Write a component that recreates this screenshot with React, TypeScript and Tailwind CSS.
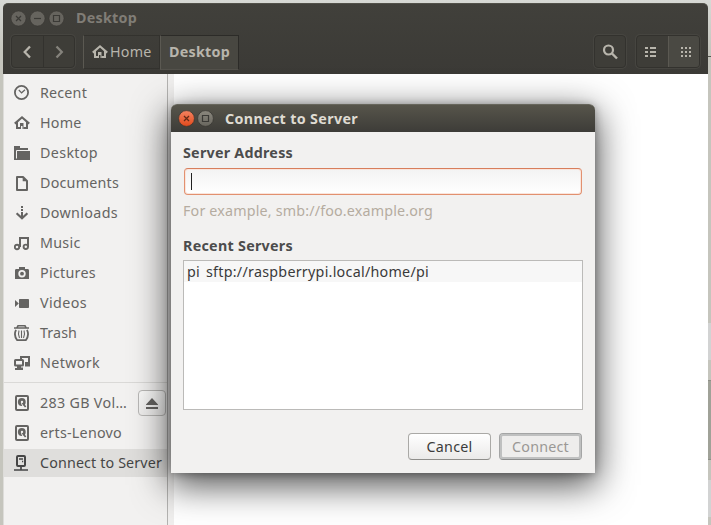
import { useLayoutEffect, useRef, type ReactNode } from "react";

const FONT = "font-['Noto_Sans','Open_Sans',sans-serif]";

/* Text whose tracking is spread so the run is exactly `width` pixels long. */
function Label({ text, width, className = "" }: { text: string; width: number; className?: string }) {
  const ref = useRef<HTMLSpanElement>(null);
  useLayoutEffect(() => {
    const el = ref.current;
    if (!el) return;
    el.style.letterSpacing = "0px";
    const natural = el.getBoundingClientRect().width;
    el.style.letterSpacing = `${(width - natural) / text.length}px`;
  }, [text, width]);
  return (
    <span ref={ref} className={`inline-block whitespace-pre ${className}`}>
      {text}
    </span>
  );
}

function Svg({ children, className = "" }: { children: ReactNode; className?: string }) {
  return (
    <svg viewBox="0 0 16 16" width="16" height="16" fill="none" stroke="currentColor" strokeWidth="2" className={`shrink-0 ${className}`}>
      {children}
    </svg>
  );
}

const HomeIcon = () => (
  <Svg>
    <path d="M.8 8.6 8 2.3l7.2 6.3" strokeWidth="2.1" />
    <path d="M3 7v6h3.6M13 7v6H9.4" />
    <path d="M6 8h3.5v6H8.5v-3H7v3H6z" fill="currentColor" stroke="none" />
  </Svg>
);

const DriveIcon = () => (
  <Svg>
    <rect x="2" y="1" width="12" height="14" rx="1" />
    <circle cx="7.8" cy="7" r="3.9" fill="currentColor" stroke="none" />
    <circle cx="8" cy="7" r="1.2" fill="#f2f1f0" stroke="none" />
    <path d="M7.5 8.2 9.5 11.8" stroke="#f2f1f0" strokeWidth="1.2" />
    <path d="M8.6 8l3 4" strokeWidth="1.7" />
  </Svg>
);

const icons: Record<string, ReactNode> = {
  Recent: (
    <Svg>
      <circle cx="7.5" cy="7.5" r="6.6" strokeWidth="1.8" />
      <path d="M4.8 5 7.6 7.8 11 4.7" strokeWidth="1.2" />
    </Svg>
  ),
  Home: <HomeIcon />,
  Desktop: (
    <Svg>
      <path d="M0 1h6v2h8v2H3v10H0z" fill="currentColor" stroke="none" />
      <path d="M3 6H16v9H2V6z" fill="currentColor" stroke="none" />
      <path d="M2.5 13.5V5.5H16" stroke="#f2f1f0" strokeWidth="1" />
    </Svg>
  ),
  Documents: (
    <Svg>
      <path d="M3 2h6l4 4v9H3z" strokeLinejoin="round" />
      <path d="M8.7 2v4.3H13z" fill="currentColor" stroke="none" />
    </Svg>
  ),
  Downloads: (
    <Svg>
      <path d="M7 1h2v2H7zM7 4h2v2H7zM7 7h2v6H7z" fill="currentColor" stroke="none" />
      <path d="M2.6 8.2 8 13.2l5.4-5" strokeWidth="2.2" />
    </Svg>
  ),
  Music: (
    <Svg>
      <circle cx="3" cy="12" r="2.2" strokeWidth="1.9" />
      <circle cx="11.8" cy="11.8" r="2.2" strokeWidth="1.9" />
      <path d="M6 12V3h8v9" />
    </Svg>
  ),
  Pictures: (
    <Svg>
      <path fillRule="evenodd" d="M5 2h6v2h2.6c.8 0 1.4.6 1.4 1.4V14H1V5.4C1 4.6 1.6 4 2.4 4H5zM8 5a3.7 3.7 0 1 0 0 7.4A3.7 3.7 0 0 0 8 5z" fill="currentColor" stroke="none" />
      <circle cx="8" cy="8.7" r="1.9" fill="currentColor" stroke="none" />
    </Svg>
  ),
  Videos: (
    <Svg>
      <path d="M1 5l3.8 3.5L1 12zM6 4h8c.6 0 1 .4 1 1v7c0 .6-.4 1-1 1H6c-.6 0-1-.4-1-1V5c0-.6.4-1 1-1z" fill="currentColor" stroke="none" />
    </Svg>
  ),
  Trash: (
    <Svg>
      <path d="M0 3h15M3 2.6 4 .8h7l1 1.8" strokeWidth="1.6" />
      <path d="M2 4.8C.2 8.5 1.2 12.6 3.2 15.2h8.6c2-2.6 3-6.7 1.2-10.4" strokeWidth="1.8" />
      <path d="M5 5.5q-1.4 3.8.5 7.5M7.5 5.5V13M10 5.5q1.4 3.8-.5 7.5" strokeWidth="1.1" />
    </Svg>
  ),
  Network: (
    <Svg>
      <path d="M7 4V2h8v6h-3" />
      <rect x="1" y="5" width="8" height="5.5" rx=".6" />
      <path d="M3 11h4v1.4h2V15H1v-2h2zM11 7h3v2h2v2.5h-5z" fill="currentColor" stroke="none" />
    </Svg>
  ),
  Drive: <DriveIcon />,
  Connect: (
    <Svg>
      <rect x="3" y="1" width="8" height="10" rx="1" />
      <path d="M5 4h4M8 6.5h1.2M7 11v4M0 15h14" strokeWidth="1.7" />
    </Svg>
  ),
};

const places: [string, number][] = [
  ["Recent", 47],
  ["Home", 41.5],
  ["Desktop", 58],
  ["Documents", 79],
  ["Downloads", 78],
  ["Music", 40.5],
  ["Pictures", 56],
  ["Videos", 47],
  ["Trash", 37],
  ["Network", 60],
];

function Row({ icon, text, width, active = false, children }: { icon: string; text: string; width: number; active?: boolean; children?: ReactNode }) {
  return (
    <div className="flex h-[30px] items-center">
      <div className={`flex h-7 w-full items-center pl-2.5 ${active ? "bg-[#dfdedc] text-[#464646]" : "text-[#656462]"}`}>
        {icons[icon]}
        <Label text={text} width={width} className="ml-2.5" />
        {children}
      </div>
    </div>
  );
}

function InactiveDot({ children }: { children: ReactNode }) {
  return (
    <svg width="17" height="17" viewBox="0 0 17 17" fill="none" stroke="#3b3a36" strokeWidth="1.2">
      <circle cx="8.5" cy="8.5" r="7.5" fill="#66645e" stroke="#34332f" strokeWidth=".5" />
      {children}
    </svg>
  );
}

export default function App() {
  return (
    <div className={`relative flex h-[525px] w-[711px] overflow-hidden bg-[#c7c7bf] text-[14.3px] leading-5 ${FONT}`}>
      <div className="flex w-full flex-col bg-linear-to-b from-[#d7d9d5] to-[#c5c5bd] to-10% pt-[3px] pl-[3px]">
        <div className="flex h-[522px]">
          <div className="flex w-[705px] flex-col">
            <header className="flex h-[71px] flex-col rounded-t-[5px] border-t border-[#52514a] bg-linear-to-b from-[#41403b] to-[#3b3a36] text-[#b8b5ac]">
              <div className="flex h-7 items-center gap-0.5 pl-[7px] text-[#807d76]">
                <InactiveDot><path d="m6 6 5 5m0-5-5 5" /></InactiveDot>
                <InactiveDot><path d="M5 8.5h7" /></InactiveDot>
                <InactiveDot><path d="M5.5 5.5h6v6h-6z" /></InactiveDot>
                <Label text="Desktop" width={61} className="ml-[9px] font-bold" />
              </div>
              <div className="flex pt-[3px] pl-2">
                <div className="flex h-[33px] w-16 rounded border border-[#33322e] bg-[#3e3d38] shadow-[0_0_0_1px_#464540]">
                  <div className="flex w-8 items-center justify-center border-r border-[#33322e]">
                    <Svg><path d="M10 2.5 4.7 8l5.3 5.5" strokeWidth="2.3" /></Svg>
                  </div>
                  <div className="flex flex-1 items-center justify-center text-[#85837c]">
                    <Svg><path d="M5.5 2.5 10.8 8l-5.3 5.5" strokeWidth="2.3" /></Svg>
                  </div>
                </div>
                <div className="ml-2 flex h-[35px]">
                  <div className="flex h-[34px] w-[77px] items-center border border-[#33322e] border-l-[#5b5952] pl-2">
                    <HomeIcon />
                    <Label text="Home" width={41.5} className="ml-0.5" />
                  </div>
                  <div className="flex w-[79px] items-center border border-[#2c2b28] border-b-[#53514b] border-l-[#5b5952] bg-[#484741] pb-px pl-2 font-bold">
                    <Label text="Desktop" width={61} />
                  </div>
                </div>
                <div className="ml-[355px] flex h-[33px] w-8 items-center justify-center rounded border border-[#33322e] bg-[#3e3d38] shadow-[0_0_0_1px_#464540]">
                  <Svg><circle cx="6.5" cy="6" r="4.5" strokeWidth="2.2" /><path d="m10 9.5 5 5" strokeWidth="2.4" /></Svg>
                </div>
                <div className="ml-2.5 flex h-[33px] w-16 overflow-hidden rounded border border-[#33322e] bg-[#3e3d38] shadow-[0_0_0_1px_#464540]">
                  <div className="flex w-[31px] items-center pl-2">
                    <svg width="11" height="10" viewBox="0 0 11 10" fill="currentColor">
                      <path d="M0 0h3v2H0zM5 0h6v2H5zM0 4h3v2H0zM5 4h6v2H5zM0 8h3v2H0zM5 8h6v2H5z" />
                    </svg>
                  </div>
                  <div className="flex flex-1 items-center border-l border-[#5b5952] bg-[#4a4943] pl-3">
                    <svg width="10" height="10" viewBox="0 0 10 10" fill="currentColor">
                      <path d="M0 0h2v2H0zM4 0h2v2H4zM8 0h2v2H8zM0 4h2v2H0zM4 4h2v2H4zM8 4h2v2H8zM0 8h2v2H0zM4 8h2v2H4zM8 8h2v2H8z" />
                    </svg>
                  </div>
                </div>
              </div>
            </header>
            <div className="flex flex-1">
              <aside className="flex w-[165px] flex-col border-r border-l border-r-[#b4b3b1] border-l-[#dddcd9] bg-[#f2f1f0] pt-1">
                {places.map(([text, width]) => (
                  <Row key={text} icon={text} text={text} width={width} />
                ))}
                <div className="mt-1 mb-[5px] h-px bg-[#dad9d7]" />
                <Row icon="Drive" text="283 GB Vol…" width={87}>
                  <div className="ml-[11px] flex h-[26px] w-7 shrink-0 items-center justify-center rounded border border-[#b9b8b6] bg-linear-to-b from-[#f9f9f8] to-[#eeedec]">
                    <svg width="12" height="11" viewBox="0 0 12 11" fill="currentColor"><path d="M6 0 12 6.5V7H0v-.5zM0 9h12v2H0z" /></svg>
                  </div>
                </Row>
                <Row icon="Drive" text="erts-Lenovo" width={82} />
                <Row icon="Connect" text="Connect to Server" width={122} active />
              </aside>
              <div className="w-1.5 bg-[#f0efee]" />
              <main className="flex-1 bg-white" />
            </div>
          </div>
          <div className="flex w-[3px] flex-col">
            <div className="h-[53px]" />
            <div className="h-px bg-[#55554f]" />
            <div className="h-[266px]" />
            <div className="h-[37px] bg-[#d2d3d3]" />
            <div className="h-5" />
            <div className="h-20 border-y border-[#8d8f87] bg-[#a0a298]" />
            <div className="h-5" />
            <div className="h-[37px] bg-[#d2d3d3]" />
          </div>
        </div>
      </div>

      <section className="absolute top-[104px] left-[171px] flex h-[369px] w-[424px] flex-col rounded-t-[6px] bg-[#f2f1f0] text-[#4c4c4c] shadow-[0_10px_36px_2px_rgba(0,0,0,0.7),0_1px_8px_rgba(0,0,0,0.3)]">
        <div className="flex h-7 items-center rounded-t-[6px] border-t border-[#67665c] bg-linear-to-b from-[#57554b] to-[#3d3c38] pl-[7px] text-[#dfdbd2]">
          <svg width="17" height="17" viewBox="0 0 17 17" fill="none">
            <defs>
              <linearGradient id="orange" x1="0" y1="0" x2="0" y2="1"><stop stopColor="#f58361" /><stop offset="1" stopColor="#e04a1c" /></linearGradient>
            </defs>
            <circle cx="8.5" cy="8.5" r="7.9" fill="url(#orange)" stroke="#35342f" strokeWidth=".7" />
            <path d="m6 6 5 5m0-5-5 5" stroke="#642a17" strokeWidth="1.3" />
          </svg>
          <svg width="17" height="17" viewBox="0 0 17 17" fill="none" className="ml-0.5">
            <defs>
              <linearGradient id="gray" x1="0" y1="0" x2="0" y2="1"><stop stopColor="#8b887e" /><stop offset="1" stopColor="#68665e" /></linearGradient>
            </defs>
            <circle cx="8.5" cy="8.5" r="7.9" fill="url(#gray)" stroke="#35342f" strokeWidth=".7" />
            <path d="M5.5 5.5h6v6h-6z" stroke="#3b3a36" strokeWidth="1.2" />
          </svg>
          <Label text="Connect to Server" width={133} className="ml-[11px] font-bold" />
        </div>
        <div className="flex flex-1 flex-col px-3 pt-[11px]">
          <Label text="Server Address" width={110} className="self-start font-bold" />
          <div className="mt-[5px] mr-px ml-px flex h-[27px] shrink-0 items-center rounded-[4px] border border-[#e2906f] border-t-[#d87e5c] bg-linear-to-b from-[#f3f3f3] to-white pl-1.5 shadow-[inset_0_0_0_1px_#fae5dc]">
            <div className="h-[17px] w-px bg-[#222]" />
          </div>
          <Label text="For example, smb://foo.example.org" width={250} className="mt-1.5 self-start text-[#b5aca0]" />
          <Label text="Recent Servers" width={110} className="mt-[15px] self-start font-bold" />
          <div className="mt-1 h-[150px] shrink-0 border border-[#bbbab8] bg-white text-[#3a3a3a]">
            <div className="flex h-[21px] items-center bg-[#f7f7f7] pl-[3px]">
              <Label text="pi" width={13} />
              <Label text="sftp://raspberrypi.local/home/pi" width={223} className="ml-1.5" />
            </div>
          </div>
          <div className="mt-[23px] mr-px flex justify-end gap-2">
            <button className="flex h-[27px] w-[83px] items-center justify-center rounded-[4px] border border-[#aaa9a6] border-b-[#8f8e8b] bg-linear-to-b from-white to-[#ebeae9] text-[#3c3c3c]">
              <Label text="Cancel" width={46} />
            </button>
            <button className="flex h-[27px] w-[83px] items-center justify-center rounded-[4px] border border-[#a4a5a5] border-b-[#8d8e8e] bg-[#eeedec] text-[#9a9895] shadow-[inset_0_0_0_2px_#bfc0c0]">
              <Label text="Connect" width={57} />
            </button>
          </div>
        </div>
      </section>
    </div>
  );
}
